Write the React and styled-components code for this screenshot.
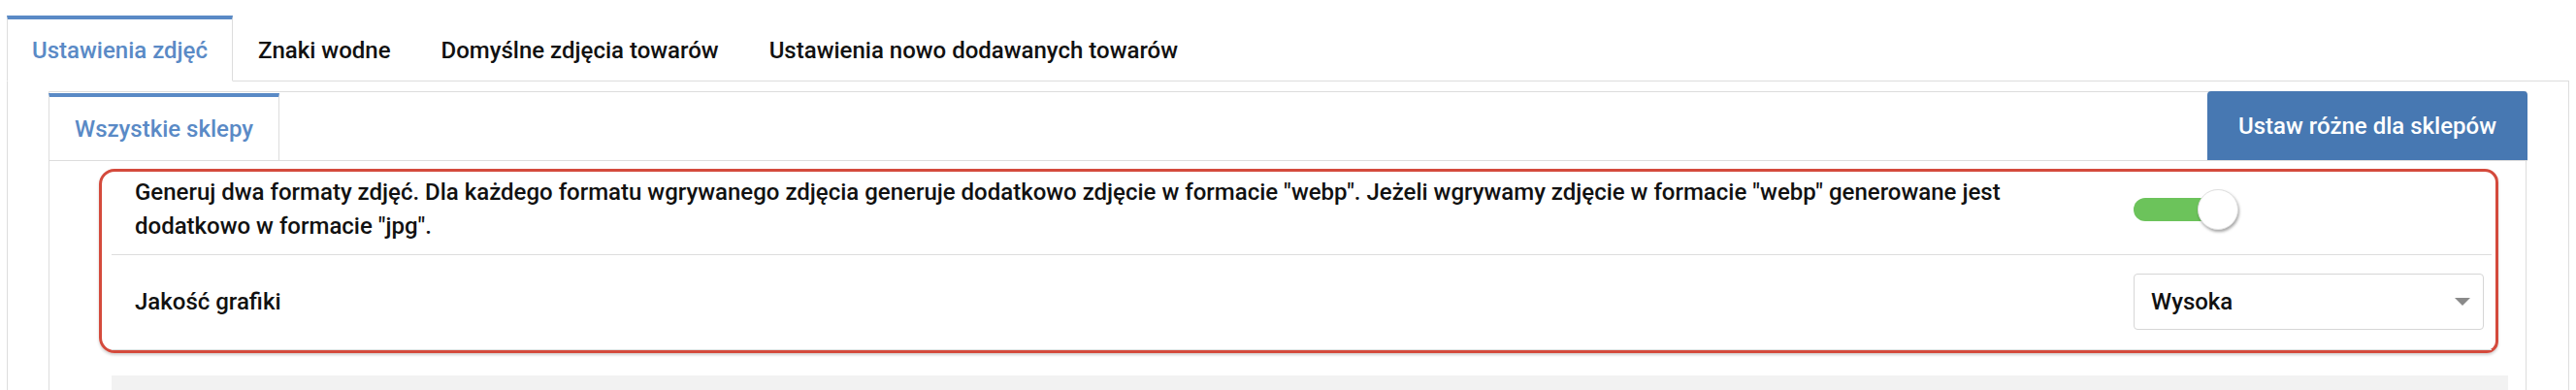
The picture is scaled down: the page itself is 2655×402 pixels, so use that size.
import React from "react";
import styled, { createGlobalStyle } from "styled-components";

const GlobalStyle = createGlobalStyle`
  html, body {
    margin: 0;
    padding: 0;
    background: #fff;
  }
  body {
    font-family: Roboto, "Liberation Sans", Arial, sans-serif;
    color: #111;
  }
`;

const Page = styled.div`
  padding: 16px 7px 0 7px;
  height: 402px;
  box-sizing: border-box;
  display: flex;
  flex-direction: column;
  overflow: hidden;
`;

const TabBar = styled.div`
  display: flex;
  border-bottom: 1px solid #ddd;
`;

const Tab = styled.div`
  height: 68px;
  box-sizing: border-box;
  display: flex;
  align-items: center;
  padding: 0 25px;
  font-size: 24px;
  font-weight: 500;
  margin-bottom: -1px;
  border: 1px solid transparent;
  border-top: 4px solid transparent;
  color: #111;
  background: transparent;
  ${(p) => p.active && `
    color: #5a8ac6;
    background: #fff;
    border-color: #ddd;
    border-top-color: #5a8ac6;
    border-bottom-color: #fff;
  `}
`;

const OuterPanel = styled.div`
  flex: 1;
  border-left: 1px solid #ddd;
  border-right: 1px solid #ddd;
  padding: 10px 43px 0 42px;
`;

const InnerPanel = styled.div`
  border: 1px solid #ddd;
  border-bottom: none;
  height: 100%;
`;

const PanelHeader = styled.div`
  display: flex;
  justify-content: space-between;
  align-items: stretch;
  height: 71px;
  border-bottom: 1px solid #ddd;
  margin: -1px -2px 0 -1px;
`;

const ShopTab = styled.div`
  display: flex;
  align-items: center;
  box-sizing: border-box;
  margin-top: 2px;
  padding: 0 26px;
  font-size: 24px;
  font-weight: 500;
  color: #5a8ac6;
  border-top: 4px solid #5a8ac6;
  border-left: 1px solid #ddd;
  border-right: 1px solid #ddd;
`;

const ShopButton = styled.button`
  border: none;
  border-radius: 4px 4px 0 0;
  background: #4778b2;
  color: #fff;
  font-family: inherit;
  font-size: 24px;
  font-weight: 500;
  padding: 0 32px;
`;

const PanelBody = styled.div`
  padding: 8px 18px 0 64px;
`;

const Highlight = styled.div`
  margin: 0 10px 0 -13px;
  border: 3px solid #d44a3c;
  border-radius: 16px 14px 12px 16px;
  padding: 0 4px 0 10px;
  box-shadow: 0 2px 3px rgba(0, 0, 0, 0.18);
`;

const Row = styled.div`
  display: flex;
  align-items: center;
  padding: ${(p) => p.pad || "19px 0 20px"};
  border-bottom: 1px solid #ddd;
`;

const Label = styled.div`
  flex: 1;
  padding: 0 40px 0 24px;
  font-size: 24px;
  font-weight: 500;
  line-height: 35px;
  color: #111;
`;

const Control = styled.div`
  width: 361px;
  margin-right: 8px;
  display: flex;
  align-items: center;
`;

const Toggle = styled.div`
  position: relative;
  width: 108px;
  height: 42px;
`;

const Track = styled.div`
  position: absolute;
  left: 0;
  top: 9px;
  width: 100px;
  height: 24px;
  border-radius: 12px;
  background: #6cc35b;
`;

const Knob = styled.div`
  position: absolute;
  right: 0;
  top: 0;
  width: 40px;
  height: 40px;
  border-radius: 50%;
  background: #fff;
  border: 1px solid #e0e0e0;
  box-shadow: 1px 2px 3px rgba(0, 0, 0, 0.35);
`;

const Select = styled.div`
  flex: 1;
  height: 58px;
  box-sizing: border-box;
  border: 1px solid #d6d6d6;
  border-radius: 4px;
  display: flex;
  align-items: center;
  justify-content: space-between;
  padding: 0 13px 0 17px;
  font-size: 24px;
  font-weight: 500;
  color: #111;
`;

const Arrow = styled.span`
  width: 0;
  height: 0;
  border-left: 8px solid transparent;
  border-right: 8px solid transparent;
  border-top: 8px solid #8a8a8a;
`;

const GreyBar = styled.div`
  margin-top: 23px;
  height: 40px;
  background: #f2f2f2;
`;

export default function App() {
  return (
    <>
      <GlobalStyle />
      <Page>
        <TabBar>
          <Tab active>Ustawienia zdjęć</Tab>
          <Tab>Znaki wodne</Tab>
          <Tab>Domyślne zdjęcia towarów</Tab>
          <Tab>Ustawienia nowo dodawanych towarów</Tab>
        </TabBar>
        <OuterPanel>
          <InnerPanel>
            <PanelHeader>
              <ShopTab>Wszystkie sklepy</ShopTab>
              <ShopButton>Ustaw różne dla sklepów</ShopButton>
            </PanelHeader>
            <PanelBody>
              <Highlight>
                <Row pad="4px 0 11px">
                  <Label>
                    Generuj dwa formaty zdjęć. Dla każdego formatu wgrywanego zdjęcia generuje dodatkowo zdjęcie w formacie "webp". Jeżeli wgrywamy zdjęcie w formacie "webp" generowane jest dodatkowo w formacie "jpg".
                  </Label>
                  <Control>
                    <Toggle>
                      <Track />
                      <Knob />
                    </Toggle>
                  </Control>
                </Row>
                <Row>
                  <Label>Jakość grafiki</Label>
                  <Control>
                    <Select>
                      Wysoka
                      <Arrow />
                    </Select>
                  </Control>
                </Row>
              </Highlight>
              <GreyBar />
            </PanelBody>
          </InnerPanel>
        </OuterPanel>
      </Page>
    </>
  );
}
